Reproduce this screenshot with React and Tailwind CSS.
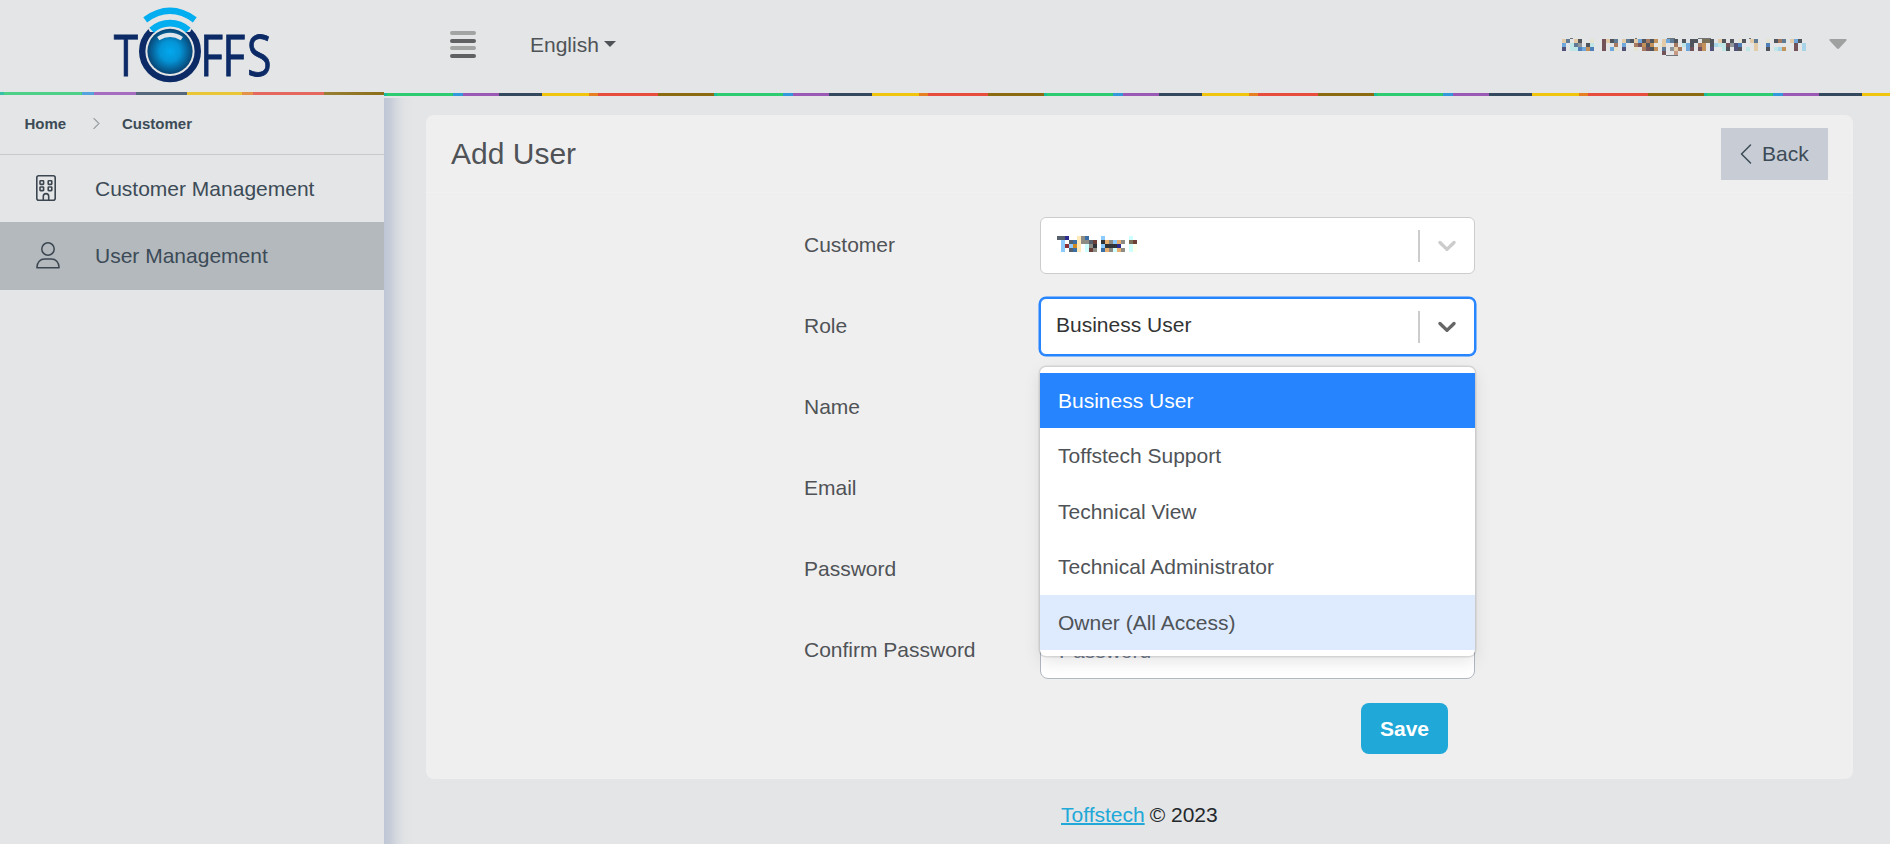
import React from "react";
import { BsChevronLeft, BsChevronRight } from "react-icons/bs";

const COLORS = {
  t: "#e3cba8", s: "#5f7a94", c: "#bfe6e6", d: "#50545c", p: "#e6e4d0", m: "#74525a",
  b: "#6fa8dc", n: "#50527a", o: "#c49158", k: "#4f7fb8", g: "#8f9598", l: "#a8d4e8",
  r: "#a67a60", v: "#7a7058",
  B: "#8ccaff", C: "#d0ffff", Y: "#ffe9b8", G: "#8c8c84", D: "#303438", N: "#2c2c90",
  O: "#d08a20", R: "#8c3038", K: "#3a6ea5", M: "#6c4038", T: "#e8b070", S: "#56606c", I: "#fffff0",
};

const ACCOUNT = [
  "ts.td..p..mtds.tsdtbdrdo.tbsd.d.dd.vvd.td.d.pd.ts..p.drs.tbd.",
  "b.csg.dc..m..r.b..rmodo.pt..r.cbd.ro.dlccmgnk...t..k......m.l",
  "n.cckbok..m.bp.n..p.rmdo.s.gtr.bm.mo.n..cd.nd.c.t..d.clo..m.l",
];
const CUSTOMER = [
  "SSN..YGK...B......C.",
  ".B.SKYGGSM.DTGBTG.vM",
  ".BRBOY.CGD.BDDDN..CI",
  ".B.SKY.CMG.KTGCTG.CI",
];

function Mosaic({ rows, className, children }) {
  const w = rows[0].length * 4;
  const h = rows.length * 4;
  return (
    <svg className={className} width={w} height={h} viewBox={`0 0 ${w} ${h}`} overflow="visible" shapeRendering="crispEdges">
      {rows.map((row, y) =>
        row.split("").map((k, x) =>
          COLORS[k] ? <rect key={`${x}-${y}`} x={x * 4} y={y * 4} width="4" height="4" fill={COLORS[k]} /> : null
        )
      )}
      {children}
    </svg>
  );
}

function Logo() {
  return (
    <svg width="160" height="80" viewBox="112 4 160 80" className="block">
      <defs>
        <radialGradient id="lens" cx="50%" cy="50%" r="50%">
          <stop offset="0%" stopColor="#02a8ee" />
          <stop offset="45%" stopColor="#0494d6" />
          <stop offset="100%" stopColor="#084474" />
        </radialGradient>
      </defs>
      <g fill="#0b2a66" stroke="#0b2a66" strokeWidth=".8" fontFamily="'Open Sans'" fontSize="56">
        <text transform="translate(113.8 75.500) scale(.79 1)">T</text>
        <text transform="translate(200 75.500) scale(.8 1)">F</text>
        <text transform="translate(222.200 75.500) scale(.8 1)">F</text>
        <text transform="translate(247 75.500) scale(.8 1)">S</text>
      </g>
      <circle cx="170" cy="51.3" r="31.500" fill="#e3e4e6" />
      <circle cx="170" cy="51.3" r="27.8" fill="none" stroke="#0b2a66" strokeWidth="6.400" />
      <path d="M150 32 L142 18 H198 L190 32 Z" fill="#e3e4e6" />
      <path d="M151.600 30.300 A27.400 27.400 0 0 1 188.400 30.300" fill="none" stroke="#02aef0" strokeWidth="6.800" />
      <path d="M145.200 19.800 Q170 1.800 194.800 19.800" fill="none" stroke="#02aef0" strokeWidth="6.500" />
      <circle cx="170" cy="51.3" r="24" fill="#e3e4e6" />
      <circle cx="170" cy="51.3" r="22.600" fill="url(#lens)" />
      <path d="M158.200 38.700 Q170 31 181.800 38.700" fill="none" stroke="#dfe6ec" strokeWidth="4" />
    </svg>
  );
}

function BuildingIcon() {
  return (
    <svg width="20" height="26" viewBox="0 0 20 26" fill="none" stroke="#3c4650" strokeWidth="1.6">
      <rect x=".8" y=".8" width="18.400" height="24.400" rx="2" />
      <rect x="4" y="5.800" width="3.600" height="3.600" rx=".6" />
      <rect x="12.200" y="5.800" width="3.600" height="3.600" rx=".6" />
      <rect x="4" y="12" width="3.600" height="3.600" rx=".6" />
      <rect x="12.200" y="12" width="3.600" height="3.600" rx=".6" />
      <path d="M7.300 25v-3.700a2.700 2.700 0 0 1 5.400 0V25" />
    </svg>
  );
}

function PersonIcon() {
  return (
    <svg width="24" height="27" viewBox="0 0 24 27" fill="none" stroke="#3c4650" strokeWidth="1.5">
      <circle cx="12" cy="7" r="6.200" />
      <path d="M.9 25.800C.9 20 4.500 17 8.500 17h7c4 0 7.600 3 7.600 8.800z" strokeLinejoin="round" />
    </svg>
  );
}

function SelectBox({ children, focused }) {
  return (
    <div
      className={
        focused
          ? "flex h-[57px] w-[435px] items-center rounded-[6px] border border-[#2684ff] bg-white pr-3 pl-[15px] ring-[1.5px] ring-[#2684ff]"
          : "flex h-[57px] w-[435px] items-center rounded-[6px] border border-[#cccccc] bg-white pr-3 pl-4"
      }
    >
      <div className="flex flex-1 items-center pb-[3px] text-[#333333]">{children}</div>
      <div className="mr-3 h-8 w-[2px] bg-[#cccccc]" />
      <svg width="30" height="30" viewBox="0 0 20 20" className={focused ? "mb-px fill-[#666666]" : "mb-px fill-[#cccccc]"}>
        <path d="M4.516 7.548c0.436-0.446 1.043-0.481 1.576 0l3.908 3.747 3.908-3.747c0.533-0.481 1.141-0.446 1.574 0 0.436 0.445 0.408 1.197 0 1.615-0.406 0.418-4.695 4.502-4.695 4.502-0.217 0.223-0.502 0.335-0.787 0.335s-0.570-0.112-0.789-0.335c0 0-4.287-4.084-4.695-4.502s-0.436-1.170 0-1.615z" />
      </svg>
    </div>
  );
}

function TextInput({ placeholder }) {
  return (
    <div className="flex h-[57px] w-[435px] items-center rounded-[8px] border border-[#b1b7c1] bg-white px-[18px] text-[#768192]">
      {placeholder}
    </div>
  );
}

function Row({ label, children }) {
  return (
    <div className="flex h-[57px] items-center">
      <div className="w-[236px] pb-[2px] text-[#4f5357]">{label}</div>
      {children}
    </div>
  );
}

const ROLES = ["Business User", "Toffstech Support", "Technical View", "Technical Administrator", "Owner (All Access)"];

function RoleMenu() {
  return (
    <div className="absolute top-[69px] left-0 z-10 w-[435px] rounded-[6px] bg-white py-[6px] shadow-[0_0_0_1.5px_rgba(0,0,0,0.1),0_6px_16.500px_rgba(0,0,0,0.1)]">
      {ROLES.map((role, i) => (
        <div
          key={role}
          className={
            i === 0
              ? "flex h-[55.4px] items-center bg-[#2684ff] px-[18px] text-white"
              : i === 4
                ? "flex h-[55.4px] items-center bg-[#deebff] px-[18px] text-[#4f5357]"
                : "flex h-[55.4px] items-center px-[18px] text-[#4f5357]"
          }
        >
          {role}
        </div>
      ))}
    </div>
  );
}

function Sidebar() {
  return (
    <aside className="flex w-[384px] shrink-0 flex-col">
      <div className="flex h-[92px] justify-center pt-1">
        <Logo />
      </div>
      <div className="h-[3px] bg-[linear-gradient(90deg,#36c2a8_0_4px,#4fd089_4px_82px,#54a3dd_82px_94px,#a56cbf_94px_136px,#55677a_136px_187px,#ebc634_187px_242px,#e4924a_242px_253px,#e5685e_253px_324px,#987f33_324px,#8c6e18_384px)]" />
      <div className="flex h-[60px] items-center border-b border-[#c8cacc] pb-[2px] pl-[24.500px] text-[15px] font-bold text-[#3c4b57]">
        <span className="w-[65px]">Home</span>
        <span className="w-[32.500px]">
          <BsChevronRight className="h-[13px] w-[13px] text-[#a5a9ad]" strokeWidth="1.2" />
        </span>
        <span>Customer</span>
      </div>
      <div className="flex h-[67px] items-center pl-9 text-[#3c4b57]">
        <span className="w-[59px] pb-[2px]"><BuildingIcon /></span>
        <span>Customer Management</span>
      </div>
      <div className="flex h-[68px] items-center bg-[#b3b9bd] pl-9 text-[#3c4b57]">
        <span className="w-[59px] pb-[2px]"><PersonIcon /></span>
        <span>User Management</span>
      </div>
    </aside>
  );
}

function Header() {
  return (
    <header className="flex h-[93px] items-center pb-1 pl-[66px]">
      <div className="flex w-[80px] flex-col gap-[3.600px]">
        <div className="h-1 w-[26px] rounded-full bg-[#a2a4a4]" />
        <div className="h-1 w-[26px] rounded-full bg-[#5f6162]" />
        <div className="h-1 w-[26px] rounded-full bg-[#a2a4a4]" />
        <div className="h-1 w-[26px] rounded-full bg-[#5f6162]" />
      </div>
      <div className="flex items-center gap-[5px] text-[#4f5357]">
        English
        <svg width="12" height="6" viewBox="0 0 12 6" className="mb-px"><path d="M0 0h12L6 6z" fill="#4f5357" /></svg>
      </div>
      <div className="ml-auto flex items-center pr-[43px]">
        <Mosaic rows={ACCOUNT} className="mr-[23px]">
          <rect x="100" y="12" width="4" height="4" fill="#74525a" />
          <rect x="112" y="12" width="4" height="4" fill="#c49a84" />
          <path d="M104 16.500h12M105 -.500h8M8 -.500h3M73 -.500h2M136 -.500h13M187 -.500h2" fill="none" stroke="#70757a" strokeWidth="1" />
        </Mosaic>
        <svg width="18" height="10" viewBox="0 0 18 10" className="mb-[2px]"><path d="M2 0h14q3 0 1 2L10 9.500q-1 .8-2 0L1 2Q-1 0 2 0" fill="#9fa1a1" /></svg>
      </div>
    </header>
  );
}

export default function App() {
  return (
    <div className="flex h-[844px] w-[1890px] overflow-hidden bg-[#e3e5e6] font-['Liberation_Sans',Arial,sans-serif] text-[21px] leading-[31.5px]">
      <Sidebar />
      <div className="flex flex-1 flex-col">
        <Header />
        <div className="h-[3px] shrink-0 bg-[repeating-linear-gradient(90deg,#1abc9c_0_3px,#2ecc71_3px_69px,#3498db_69px_79px,#9b59b6_79px_115px,#34495e_115px_158px,#f1c40f_158px_205px,#e67e22_205px_214px,#e74c3c_214px_274px,#8c6a10_274px_330px)]" />
        <div className="flex flex-1">
          <div className="mt-[2px] w-[42px] bg-[linear-gradient(90deg,#bfc6d6_0px,#c6ccd8_6px,#d6dae0_13px,#e0e2e4_20px,#e3e5e6_30px)]" />
          <div className="flex flex-1 flex-col pt-[19px]">
            <main className="h-[664px] w-[1427px] rounded-[8px] bg-[#efefef]">
              <div className="flex h-[78px] items-center justify-between border-b border-[#f1f1f1] pr-[25px] pl-[25px]">
                <h1 className="text-[30px] text-[#4f5357]">Add User</h1>
                <button className="flex h-[52px] w-[107px] items-center bg-[#c8cdd5] pl-[13px] text-[#3c4b57]">
                  <BsChevronLeft className="mr-1 h-6 w-6 shrink-0" />
                  Back
                </button>
              </div>
              <form className="flex flex-col gap-6 pt-6 pl-[378px]">
                <Row label="Customer">
                  <SelectBox><Mosaic rows={CUSTOMER} /></SelectBox>
                </Row>
                <Row label="Role">
                  <div className="relative">
                    <SelectBox focused>Business User</SelectBox>
                    <RoleMenu />
                  </div>
                </Row>
                <Row label="Name"><TextInput /></Row>
                <Row label="Email"><TextInput /></Row>
                <Row label="Password"><TextInput /></Row>
                <Row label="Confirm Password"><TextInput placeholder="Password" /></Row>
                <div className="flex w-[644px] justify-end">
                  <button type="button" className="h-[51px] w-[87px] rounded-[8px] bg-[#20a8d8] font-bold text-white">Save</button>
                </div>
              </form>
            </main>
            <footer className="flex gap-[5px] pt-[20px] pl-[635px] text-[#23282c]">
              <a className="text-[#20a8d8] underline decoration-2">Toffstech</a>
              <span>© 2023</span>
            </footer>
          </div>
        </div>
      </div>
    </div>
  );
}
